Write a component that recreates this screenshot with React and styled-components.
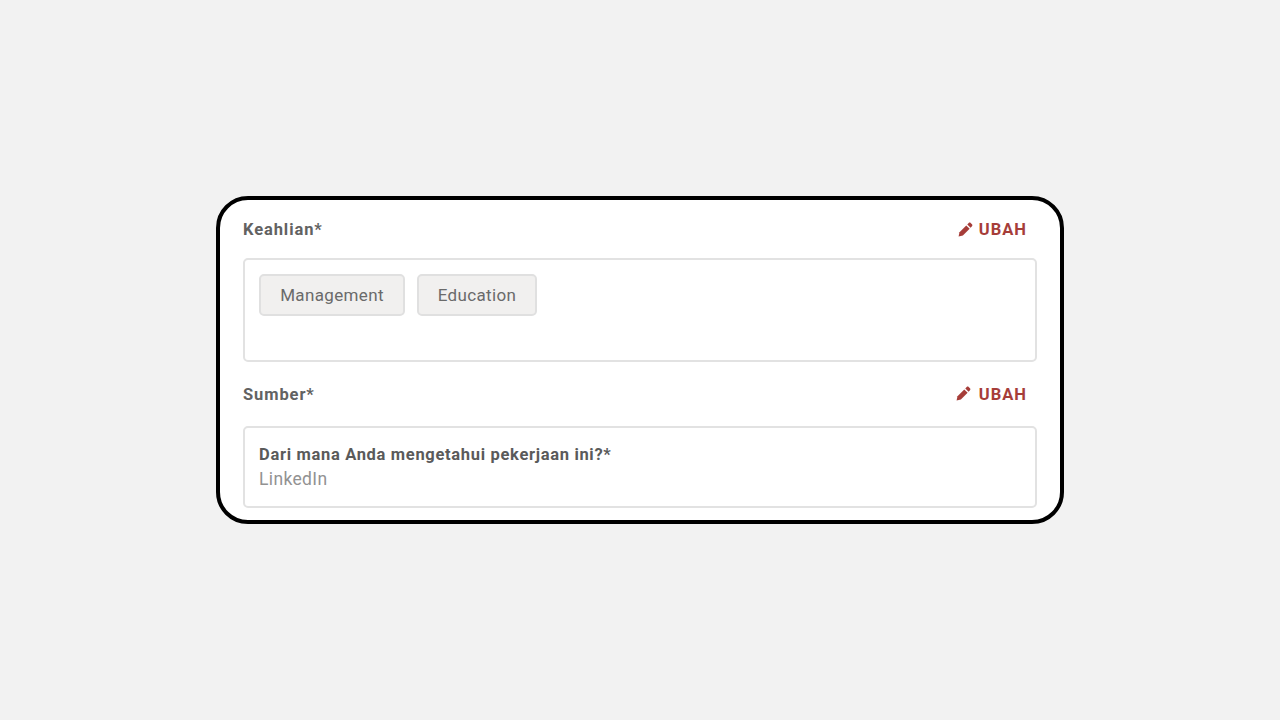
import React from "react";
import styled, { createGlobalStyle } from "styled-components";

const Global = createGlobalStyle`
  html, body { margin: 0; padding: 0; background: #f2f2f2; }
  body { font-family: Roboto, "Noto Sans", sans-serif; }
`;

const Page = styled.div`
  width: 1280px;
  height: 720px;
  display: flex;
  align-items: flex-start;
  justify-content: center;
  padding-top: 196px;
  box-sizing: border-box;
`;

const Card = styled.div`
  width: 848px;
  height: 328px;
  box-sizing: border-box;
  background: #fff;
  border: 4px solid #000;
  border-radius: 32px;
  padding: 14px 23px 0;
  display: flex;
  flex-direction: column;
`;

const Header = styled.div`
  height: 30px;
  display: flex;
  align-items: center;
  justify-content: space-between;
  padding-right: 10px;
  margin-bottom: ${(p) => p.$gap}px;
`;

const Title = styled.h2`
  margin: 0;
  font-size: 16.5px;
  font-weight: 700;
  letter-spacing: 0.9px;
  color: #626262;
`;

const EditButton = styled.button`
  border: 0;
  background: none;
  padding: 0;
  display: flex;
  align-items: center;
  gap: ${(p) => p.$gap}px;
  font-family: inherit;
  font-size: 16.5px;
  font-weight: 700;
  letter-spacing: 1px;
  color: #a63d39;
`;

const Box = styled.div`
  box-sizing: border-box;
  height: ${(p) => p.$height}px;
  border: 2px solid #e2e2e2;
  border-radius: 5px;
  padding: ${(p) => p.$pad};
  margin-bottom: ${(p) => p.$after}px;
`;

const Chips = styled.div`
  display: flex;
  gap: 12px;
`;

const Chip = styled.span`
  box-sizing: border-box;
  height: 42px;
  width: ${(p) => p.$width}px;
  display: flex;
  align-items: center;
  justify-content: center;
  background: #f1f0ef;
  border: 2px solid #e0e0e0;
  border-radius: 5px;
  font-size: 17px;
  letter-spacing: 0.35px;
  color: #6a6a6a;
`;

const Question = styled.div`
  font-size: 16.5px;
  font-weight: 700;
  letter-spacing: 0.68px;
  line-height: 26px;
  color: #5a5a5a;
`;

const Answer = styled.div`
  font-size: 17.5px;
  letter-spacing: 0.35px;
  line-height: 24px;
  margin-top: -1px;
  color: #929292;
`;

const PencilWrap = styled.span`
  display: flex;
  margin-top: ${(p) => p.$lift}px;
`;

const Pencil = ({ size, lift }) => (
  <PencilWrap $lift={lift}>
    <svg width={size} height={size} viewBox="0 0 16 16" aria-hidden="true">
      <path d="M.6 15.4l1-4.6 7.2-7.2 3.6 3.6-7.2 7.2z" fill="#a63d39" />
      <path d="M9.9 2.6l1.5-1.5c.6-.6 1.5-.6 2.1 0l1.4 1.4c.6.6.6 1.5 0 2.1l-1.5 1.5z" fill="#a63d39" />
    </svg>
  </PencilWrap>
);

export default function App() {
  return (
    <>
      <Global />
      <Page>
        <Card>
          <Header $gap={14}>
            <Title>Keahlian*</Title>
            <EditButton $gap={6}>
              <Pencil size={15} lift={0} />
              UBAH
            </EditButton>
          </Header>
          <Box $height={104} $pad="14px" $after={17}>
            <Chips>
              <Chip $width={146}>Management</Chip>
              <Chip $width={120}>Education</Chip>
            </Chips>
          </Box>
          <Header $gap={17}>
            <Title>Sumber*</Title>
            <EditButton $gap={8}>
              <Pencil size={15} lift={-1} />
              UBAH
            </EditButton>
          </Header>
          <Box $height={82} $pad="14px">
            <Question>Dari mana Anda mengetahui pekerjaan ini?*</Question>
            <Answer>LinkedIn</Answer>
          </Box>
        </Card>
      </Page>
    </>
  );
}
